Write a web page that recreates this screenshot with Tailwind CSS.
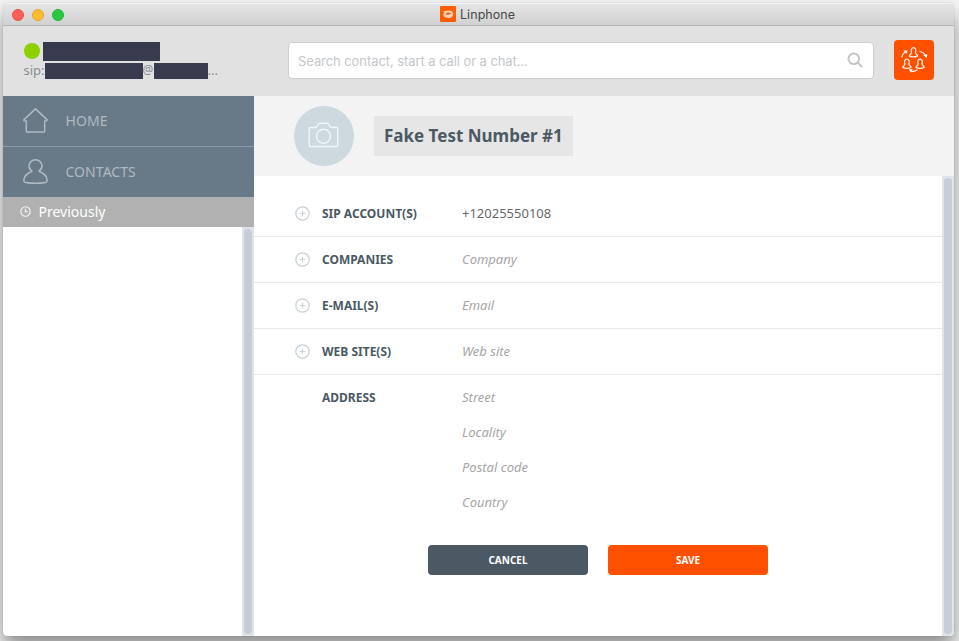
<!DOCTYPE html>
<html lang="en">
<head>
<meta charset="utf-8">
<title>Linphone</title>
<script src="https://cdn.jsdelivr.net/npm/@tailwindcss/browser@4"></script>
</head>
<body class="w-[959px] h-[641px] overflow-hidden bg-[#f4f4f4] pt-[3px] pl-[3px] font-['Noto_Sans',sans-serif]">
<div class="w-[951px] h-[633px] flex flex-col rounded-t-[5px] rounded-b-[4px] overflow-hidden bg-white shadow-[0_0_1px_rgba(0,0,0,0.35),0_12px_20px_rgba(0,0,0,0.42)]">
  <header class="h-[23px] shrink-0 flex items-center relative border-t border-[#f3f3f3] bg-linear-to-b from-[#e5e5e5] to-[#d0d0d0] shadow-[inset_0_-1px_0_#b5b5b5]">
    <div class="flex gap-2 pl-[8.500px]">
      <span class="size-3 rounded-full bg-[#ff5f57] border border-[#e9504a]"></span>
      <span class="size-3 rounded-full bg-[#ffbd2e] border border-[#e5a52e]"></span>
      <span class="size-3 rounded-full bg-[#28c940] border border-[#25b33a]"></span>
    </div>
    <div class="absolute left-[437px] top-[2px] flex items-center gap-[4px] h-4">
      <svg class="size-4" viewBox="0 0 16 16"><rect width="16" height="16" rx="1" fill="#ff5e00"/><path d="M3 4.800c2 .8 3.300-.5 5.600-.4 3 .1 4.600 1.500 4.600 3.800 0 2.300-2.200 3.700-5 3.700S3.300 10.600 3.300 8.600c0-1 .5-1.800 1.300-2.400z" fill="#ffd3bb"/><path d="M5.300 8.300c1.200-1.500 2.300-1.800 3.700-1.700 1.300.1 2 .6 2.100 1.200-1.500-.2-1.700 1-3 1.100-1 .1-1.700-.6-2.800-.6z" fill="#ff5e00"/></svg>
      <span class="pt-px font-['Inter',sans-serif] text-[12.500px] leading-4 tracking-[0.050px] text-[#484848]">Linphone</span>
    </div>
  </header>

  <div class="h-[70px] shrink-0 flex bg-[#e1e1e1]">
    <div class="w-[285px] pl-[20.500px] pt-4 flex flex-col text-[#868d92]">
      <div class="h-[19px] flex items-center gap-[3px]">
        <span class="size-4 -mt-px rounded-full bg-[#8fd000]"></span>
        <span class="w-[117px] h-[19px] bg-[#373b4d]"></span>
      </div>
      <div class="mt-[2px] h-4 flex items-center text-[13px] leading-4">
        <span class="w-[21px] -mt-[2px]">sip:</span>
        <span class="w-[98px] h-4 bg-[#373b4d]"></span>
        <span class="w-[11px] text-[12px] -mt-[2px]">@</span>
        <span class="w-[54px] h-4 bg-[#373b4d]"></span>
        <span class="-mt-[2px]">...</span>
      </div>
    </div>
    <div class="mt-4 w-[586px] h-[37px] rounded-[4px] border border-[#cecece] bg-white flex items-center justify-between pl-[9px] pr-[10px]">
      <span class="font-['Inter',sans-serif] text-[13px] leading-4 -tracking-[0.075px] text-[#c5c7c9]">Search contact, start a call or a chat...</span>
      <svg class="size-4 -mt-[2px]" viewBox="0 0 16 16" fill="none" stroke="#c6c6c6" stroke-width="2" stroke-linecap="round"><circle cx="6.800" cy="6.800" r="5.300"/><path d="M10.800 10.800 14.500 14.500"/></svg>
    </div>
    <div class="ml-5 mt-[14px] size-[40px] rounded-[4px] bg-[#ff5000]">
      <svg class="size-[40px]" viewBox="0 0 40 40" fill="none" stroke="#fff0e8" stroke-width="1.250" stroke-linejoin="round" stroke-linecap="round">
        <g id="bell"><path d="M17.500 12.300c-.8-2.700.1-4.700 2-4.700s2.800 2 2 4.700c-.1 1.300.4 1.600 1.200 2.200.6.500 1 .9.900 1.600-2 .8-6.200.8-8.200 0-.1-.7.300-1.100.9-1.600.8-.6 1.300-.9 1.200-2.200z"/></g>
        <use href="#bell" x="-6.600" y="11.400"/><use href="#bell" x="6.600" y="11.400"/>
        <path d="M7.800 17.200c.3-2 1.400-3.800 3-5M26 11.500c2.400.5 4.200 1.800 5.400 3.500M17 31c2.300.9 4.400.4 6.200-1.200"/>
        <g fill="#fff0e8" stroke="none"><path d="M9.400 10.200l4.300.2-1.200 3.700zM29.300 15.200l4-1.200-.4 4.100zM14.700 29.200l3.900-.3-1.600 4.100z"/></g>
      </svg>
    </div>
  </div>

  <div class="flex flex-1 min-h-0">
    <aside class="w-[251px] flex flex-col shrink-0">
      <nav class="flex flex-col text-[14px] text-[#afb9c1] bg-[#687988]">
        <div class="h-[50px] flex items-center pl-5 pb-[2px]">
          <svg class="size-[25px]" viewBox="0 0 25 25" fill="none" stroke="#b0bac2" stroke-width="1.500" stroke-linejoin="round" stroke-linecap="round"><path d="M3.300 13v10.100c0 .5.300.8.800.8h16.800c.5 0 .8-.3.800-.8V13M1 12.600v-1L12.500.9 24 11.600v1l-1.500.4M1 12.600l1.500.4"/></svg>
          <span class="ml-[17.500px] tracking-[0.050px]">HOME</span>
        </div>
        <div class="h-[51px] flex items-center pl-5 pb-[2px] border-t border-[#8d9ba7]">
          <svg class="size-[25px]" viewBox="0 0 25 25" fill="none" stroke="#b0bac2" stroke-width="1.500" stroke-linejoin="round"><path d="M9 12.200C7 10.800 6 9 6 7a6.500 6.200 0 0 1 13 0c0 2-1 3.800-3 5.200 4 1.600 8 4.600 8.200 9.300 0 1.200-.6 1.700-1.700 1.900-6 1-14 1-20 0C1.400 23.200.8 22.700.8 21.500 1 16.800 5 13.800 9 12.200z"/></svg>
          <span class="ml-[17.500px] tracking-[0.050px]">CONTACTS</span>
        </div>
      </nav>
      <div class="h-[30px] shrink-0 bg-[#b1b1b1] flex items-center pl-[17px] pb-px text-[14px] text-white">
        <svg class="size-[11px]" viewBox="0 0 11 11" fill="none" stroke="#f5f5f5" stroke-width="1.100"><circle cx="5.500" cy="5.500" r="4.700"/><path d="M5.300 2.800v3h2.700"/></svg>
        <span class="ml-[7.500px] -mt-px">Previously</span>
      </div>
      <div class="flex-1 flex justify-end">
        <div class="w-3 bg-[#e0e4e8] p-[2px]"><div class="h-full rounded-full bg-[#c6cdd6]"></div></div>
      </div>
    </aside>

    <main class="flex-1 flex flex-col min-w-0">
      <div class="h-[80px] shrink-0 bg-[#f3f3f3] flex items-center pl-[39.500px]">
        <div class="size-[60px] rounded-full bg-[#cdd8df] flex items-center justify-center">
          <svg class="w-[31px] h-[26px] -mt-[2px]" viewBox="0 0 31 26" fill="none" stroke="#f3f6f7" stroke-width="1.400" stroke-linejoin="round"><path d="M2.700 5.500H7c1.300 0 1.800-.6 2.400-1.700.6-1.200 1.300-2.600 2.700-2.600h6.800c1.400 0 2.100 1.400 2.700 2.600.6 1.100 1.100 1.700 2.400 1.700h4.300c.9 0 1.500.6 1.500 1.500v16c0 .9-.6 1.500-1.500 1.500H2.700c-.9 0-1.500-.6-1.500-1.500V7c0-.9.600-1.500 1.500-1.500z"/><circle cx="15.500" cy="14.300" r="7"/></svg>
        </div>
        <div class="ml-[20.500px] w-[199px] h-[40px] bg-[#e6e6e6] flex items-center pl-[10px] text-[17px] font-bold text-[#4b5964] whitespace-nowrap">Fake Test Number #1</div>
      </div>

      <div class="flex-1 flex min-h-0">
        <div class="flex-1 pt-[14px] text-[13px] text-[#a6a6a6]">
          <div class="h-[47px] flex items-center pl-[41px] border-b border-[#e9e9e9]">
            <svg class="size-[15px]" viewBox="0 0 15 15" fill="none" stroke="#c9d1d7" stroke-width="1.200"><circle cx="7.500" cy="7.500" r="6.700"/><path d="M4.800 7.500h5.400M7.500 4.800v5.400"/></svg>
            <span class="ml-3 w-[140px] pt-px text-[12px] font-bold text-[#4b5964]">SIP ACCOUNT(S)</span>
            <span class="pt-[2px] text-[#676767]">+12025550108</span>
          </div>
          <div class="h-[46px] flex items-center pl-[41px] border-b border-[#e9e9e9]">
            <svg class="size-[15px]" viewBox="0 0 15 15" fill="none" stroke="#c9d1d7" stroke-width="1.200"><circle cx="7.500" cy="7.500" r="6.700"/><path d="M4.800 7.500h5.400M7.500 4.800v5.400"/></svg>
            <span class="ml-3 w-[140px] text-[12px] font-bold text-[#4b5964]">COMPANIES</span>
            <span class="italic">Company</span>
          </div>
          <div class="h-[46px] flex items-center pl-[41px] border-b border-[#e9e9e9]">
            <svg class="size-[15px]" viewBox="0 0 15 15" fill="none" stroke="#c9d1d7" stroke-width="1.200"><circle cx="7.500" cy="7.500" r="6.700"/><path d="M4.800 7.500h5.400M7.500 4.800v5.400"/></svg>
            <span class="ml-3 w-[140px] text-[12px] font-bold text-[#4b5964]">E-MAIL(S)</span>
            <span class="italic">Email</span>
          </div>
          <div class="h-[46px] flex items-center pl-[41px] border-b border-[#e9e9e9]">
            <svg class="size-[15px]" viewBox="0 0 15 15" fill="none" stroke="#c9d1d7" stroke-width="1.200"><circle cx="7.500" cy="7.500" r="6.700"/><path d="M4.800 7.500h5.400M7.500 4.800v5.400"/></svg>
            <span class="ml-3 w-[140px] text-[12px] font-bold text-[#4b5964]">WEB SITE(S)</span>
            <span class="italic">Web site</span>
          </div>
          <div class="flex pl-[68px] pt-[5px] leading-[35px]">
            <span class="w-[140px] text-[12px] font-bold text-[#4b5964]">ADDRESS</span>
            <div class="flex flex-col italic">
              <span>Street</span><span>Locality</span><span>Postal code</span><span>Country</span>
            </div>
          </div>
          <div class="flex gap-5 pl-[174px] pt-[25px] text-[10px] font-bold text-white">
            <button class="w-[160px] h-[30px] rounded-[4px] bg-[#4b5964]">CANCEL</button>
            <button class="w-[160px] h-[30px] rounded-[4px] bg-[#ff5000]">SAVE</button>
          </div>
        </div>
        <div class="w-3 bg-[#e0e4e8] p-[2px]"><div class="h-full rounded-full bg-[#c6cdd6]"></div></div>
      </div>
    </main>
  </div>
</div>
</body>
</html>
